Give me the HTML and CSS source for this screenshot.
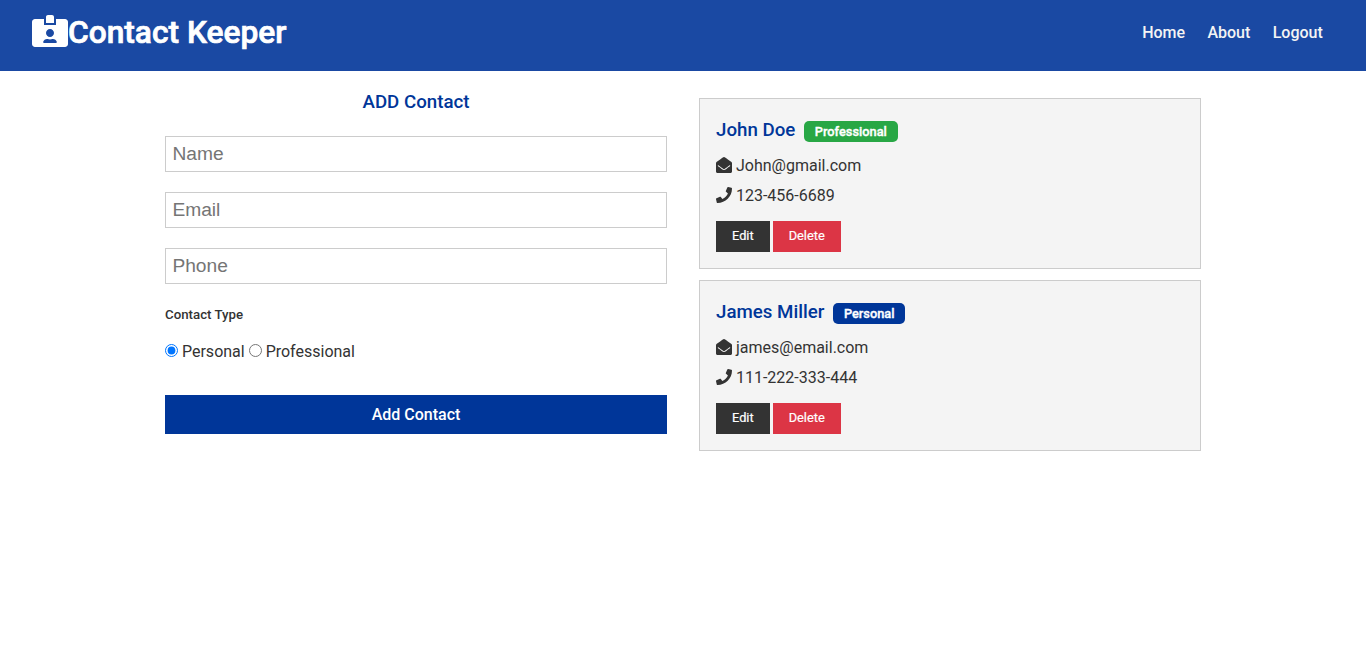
FILE: index.html
```html
<!DOCTYPE html>
<html lang="en">
<head>
<meta charset="utf-8">
<title>Contact Keeper</title>
<link rel="stylesheet" href="styles.css">
</head>
<body>
<nav class="navbar">
  <h1 class="logo">
    <svg class="logo-icon" viewBox="0 0 576 512"><path fill="#fff" d="M528 64H384v96H192V64H48C21.500 64 0 85.500 0 112v352c0 26.500 21.500 48 48 48h480c26.500 0 48-21.500 48-48V112c0-26.500-21.500-48-48-48zM288 224c35.300 0 64 28.700 64 64s-28.700 64-64 64-64-28.700-64-64 28.700-64 64-64zm93.300 224H194.700c-10.400 0-18.800-10-15.600-19.800 8.300-25.600 32.400-44.200 60.900-44.200h8.200c12.300 5.100 25.700 8 39.800 8s27.600-2.900 39.800-8h8.200c28.400 0 52.500 18.500 60.900 44.200 3.200 9.800-5.200 19.800-15.600 19.800zM224 32c0-17.700 14.300-32 32-32h64c17.700 0 32 14.300 32 32v96H224V32z"/></svg><span class="logo-text">Contact Keeper</span>
  </h1>
  <ul class="nav-links">
    <li><a href="#">Home</a></li>
    <li><a href="#">About</a></li>
    <li><a href="#">Logout</a></li>
  </ul>
</nav>
<main class="container">
  <form class="contact-form">
    <h2 class="form-title">ADD Contact</h2>
    <input class="field" type="text" placeholder="Name">
    <input class="field" type="email" placeholder="Email">
    <input class="field" type="text" placeholder="Phone">
    <h5 class="type-label">Contact Type</h5>
    <div class="radios">
      <input class="radio" type="radio" name="type" checked> Personal
      <input class="radio" type="radio" name="type"> Professional
    </div>
    <button class="submit" type="button">Add Contact</button>
  </form>
  <section class="contacts">
    <article class="card">
      <h3 class="card-name">John Doe <span class="badge badge-green">Professional</span></h3>
      <ul class="card-info">
        <li><svg class="info-icon" viewBox="0 0 512 512"><path fill="currentColor" d="M512 464c0 26.510-21.490 48-48 48H48c-26.510 0-48-21.490-48-48V200.724a48 48 0 0 1 18.387-37.776c24.913-19.529 45.501-35.365 164.200-121.511C199.412 29.170 232.797-.347 256 .003c23.198-.354 56.596 29.170 73.413 41.434 118.687 86.137 139.303 101.995 164.200 121.511A48 48 0 0 1 512 200.724V464zm-65.666-196.605c-2.563-3.728-7.700-4.595-11.339-1.907-22.845 16.873-55.462 40.705-105.582 77.079-16.825 12.266-50.210 41.781-73.413 41.430-23.211.344-56.559-29.143-73.413-41.430-50.114-36.370-82.734-60.204-105.582-77.079-3.639-2.688-8.776-1.821-11.339 1.907l-9.072 13.196a7.998 7.998 0 0 0 1.839 10.967c22.887 16.899 55.454 40.690 105.303 76.868 20.274 14.781 56.524 47.813 92.264 47.573 35.724.242 71.961-32.771 92.263-47.573 49.850-36.179 82.418-59.970 105.303-76.868a7.998 7.998 0 0 0 1.839-10.967l-9.071-13.196z"/></svg> John@gmail.com</li>
        <li><svg class="info-icon" viewBox="0 0 512 512"><path fill="currentColor" d="M493.400 24.600l-104-24c-11.300-2.600-22.900 3.300-27.500 13.900l-48 112c-4.200 9.800-1.400 21.300 6.900 28l60.600 49.600c-36 76.700-98.900 140.500-177.200 177.200l-49.600-60.600c-6.800-8.300-18.200-11.100-28-6.900l-112 48C3.900 366.500-2 378.100.6 389.400l24 104C27.100 504.200 36.700 512 48 512c256.100 0 464-207.500 464-464 0-11.200-7.700-20.900-18.600-23.400z"/></svg> 123-456-6689</li>
      </ul>
      <div class="card-actions">
        <button class="btn btn-dark" type="button">Edit</button>
        <button class="btn btn-danger" type="button">Delete</button>
      </div>
    </article>
    <article class="card">
      <h3 class="card-name">James Miller <span class="badge badge-blue">Personal</span></h3>
      <ul class="card-info">
        <li><svg class="info-icon" viewBox="0 0 512 512"><path fill="currentColor" d="M512 464c0 26.510-21.490 48-48 48H48c-26.510 0-48-21.490-48-48V200.724a48 48 0 0 1 18.387-37.776c24.913-19.529 45.501-35.365 164.200-121.511C199.412 29.170 232.797-.347 256 .003c23.198-.354 56.596 29.170 73.413 41.434 118.687 86.137 139.303 101.995 164.200 121.511A48 48 0 0 1 512 200.724V464zm-65.666-196.605c-2.563-3.728-7.700-4.595-11.339-1.907-22.845 16.873-55.462 40.705-105.582 77.079-16.825 12.266-50.210 41.781-73.413 41.430-23.211.344-56.559-29.143-73.413-41.430-50.114-36.370-82.734-60.204-105.582-77.079-3.639-2.688-8.776-1.821-11.339 1.907l-9.072 13.196a7.998 7.998 0 0 0 1.839 10.967c22.887 16.899 55.454 40.690 105.303 76.868 20.274 14.781 56.524 47.813 92.264 47.573 35.724.242 71.961-32.771 92.263-47.573 49.850-36.179 82.418-59.970 105.303-76.868a7.998 7.998 0 0 0 1.839-10.967l-9.071-13.196z"/></svg> james@email.com</li>
        <li><svg class="info-icon" viewBox="0 0 512 512"><path fill="currentColor" d="M493.400 24.600l-104-24c-11.300-2.600-22.900 3.300-27.500 13.900l-48 112c-4.200 9.800-1.400 21.300 6.900 28l60.600 49.600c-36 76.700-98.900 140.500-177.200 177.200l-49.600-60.600c-6.800-8.300-18.200-11.100-28-6.900l-112 48C3.900 366.500-2 378.100.6 389.400l24 104C27.100 504.200 36.700 512 48 512c256.100 0 464-207.500 464-464 0-11.200-7.700-20.900-18.600-23.400z"/></svg> 111-222-333-444</li>
      </ul>
      <div class="card-actions">
        <button class="btn btn-dark" type="button">Edit</button>
        <button class="btn btn-danger" type="button">Delete</button>
      </div>
    </article>
  </section>
</main>
</body>
</html>
```
FILE: styles.css
```css
* { box-sizing: border-box; margin: 0; padding: 0; }
body { font-family: Roboto, sans-serif; font-size: 16px; line-height: 1.6; color: #333; background: #fff; }
ul { list-style: none; }
a { text-decoration: none; color: inherit; }

.navbar { display: flex; justify-content: space-between; align-items: center; height: 71px; padding: 0 32px 8px; background: #1a49a3; color: #fff; }
.logo { display: flex; align-items: center; font-size: 31.700px; font-weight: 500; line-height: 1; -webkit-text-stroke: 0.7px #fff; }
.logo-icon { width: 36px; height: 32px; margin-bottom: 2px; }
.logo-text { padding-top: 2px; }
.nav-links { display: flex; margin-top: 2px; }
.nav-links li { padding: 0 11.200px; font-weight: 500; color: #f4f4f4; }

.container { display: grid; grid-template-columns: 1fr 1fr; gap: 32px; max-width: 1100px; margin: 0 auto; padding: 0 32px; }

.contact-form { padding-top: 18px; }
.form-title { font-size: 18.720px; font-weight: 500; line-height: 26px; color: #003699; text-align: center; margin-bottom: 21px; }
.field { display: block; width: 100%; height: 36px; margin-bottom: 20px; padding: 0 6.400px; border: 1px solid #ccc; font-family: "Liberation Sans", sans-serif; font-size: 19.200px; color: #333; }
.type-label { font-size: 13.280px; font-weight: 500; line-height: 20px; margin-top: 21px; margin-bottom: 14px; color: #333; }
.radios { line-height: 26px; margin-bottom: 30px; }
.radio { margin: 0; vertical-align: 0; }
.submit { display: block; width: 100%; height: 39px; border: 0; background: #003699; color: #fff; font-family: Roboto, sans-serif; font-size: 16px; font-weight: 500; }

.contacts { padding-top: 27px; }
.card { height: 171px; margin-bottom: 11px; padding: 16px; background: #f4f4f4; border: 1px solid #ccc; }
.card-name { font-size: 18.720px; font-weight: 500; line-height: 30px; color: #003699; }
.badge { display: inline-block; margin-left: 4.200px; padding: 0 10.700px; border-radius: 5px; font-size: 12.800px; font-weight: 500; line-height: 21px; color: #fff; vertical-align: middle; -webkit-text-stroke: 0.35px #fff; }
.badge-green { background: #28a745; }
.badge-blue { background: #003699; }
.card-info { margin-top: 6px; }
.card-info li { height: 30px; line-height: 30px; }
.info-icon { width: 16px; height: 16px; vertical-align: -2px; }
.card-actions { display: flex; gap: 3px; margin-top: 10px; }
.btn { height: 31px; padding: 0 16px 2px; border: 0; color: #fff; font-family: Roboto, sans-serif; font-size: 12.800px; font-weight: 400; -webkit-text-stroke: 0.2px #fff; }
.btn-dark { background: #333; }
.btn-danger { background: #dc3545; }
```
